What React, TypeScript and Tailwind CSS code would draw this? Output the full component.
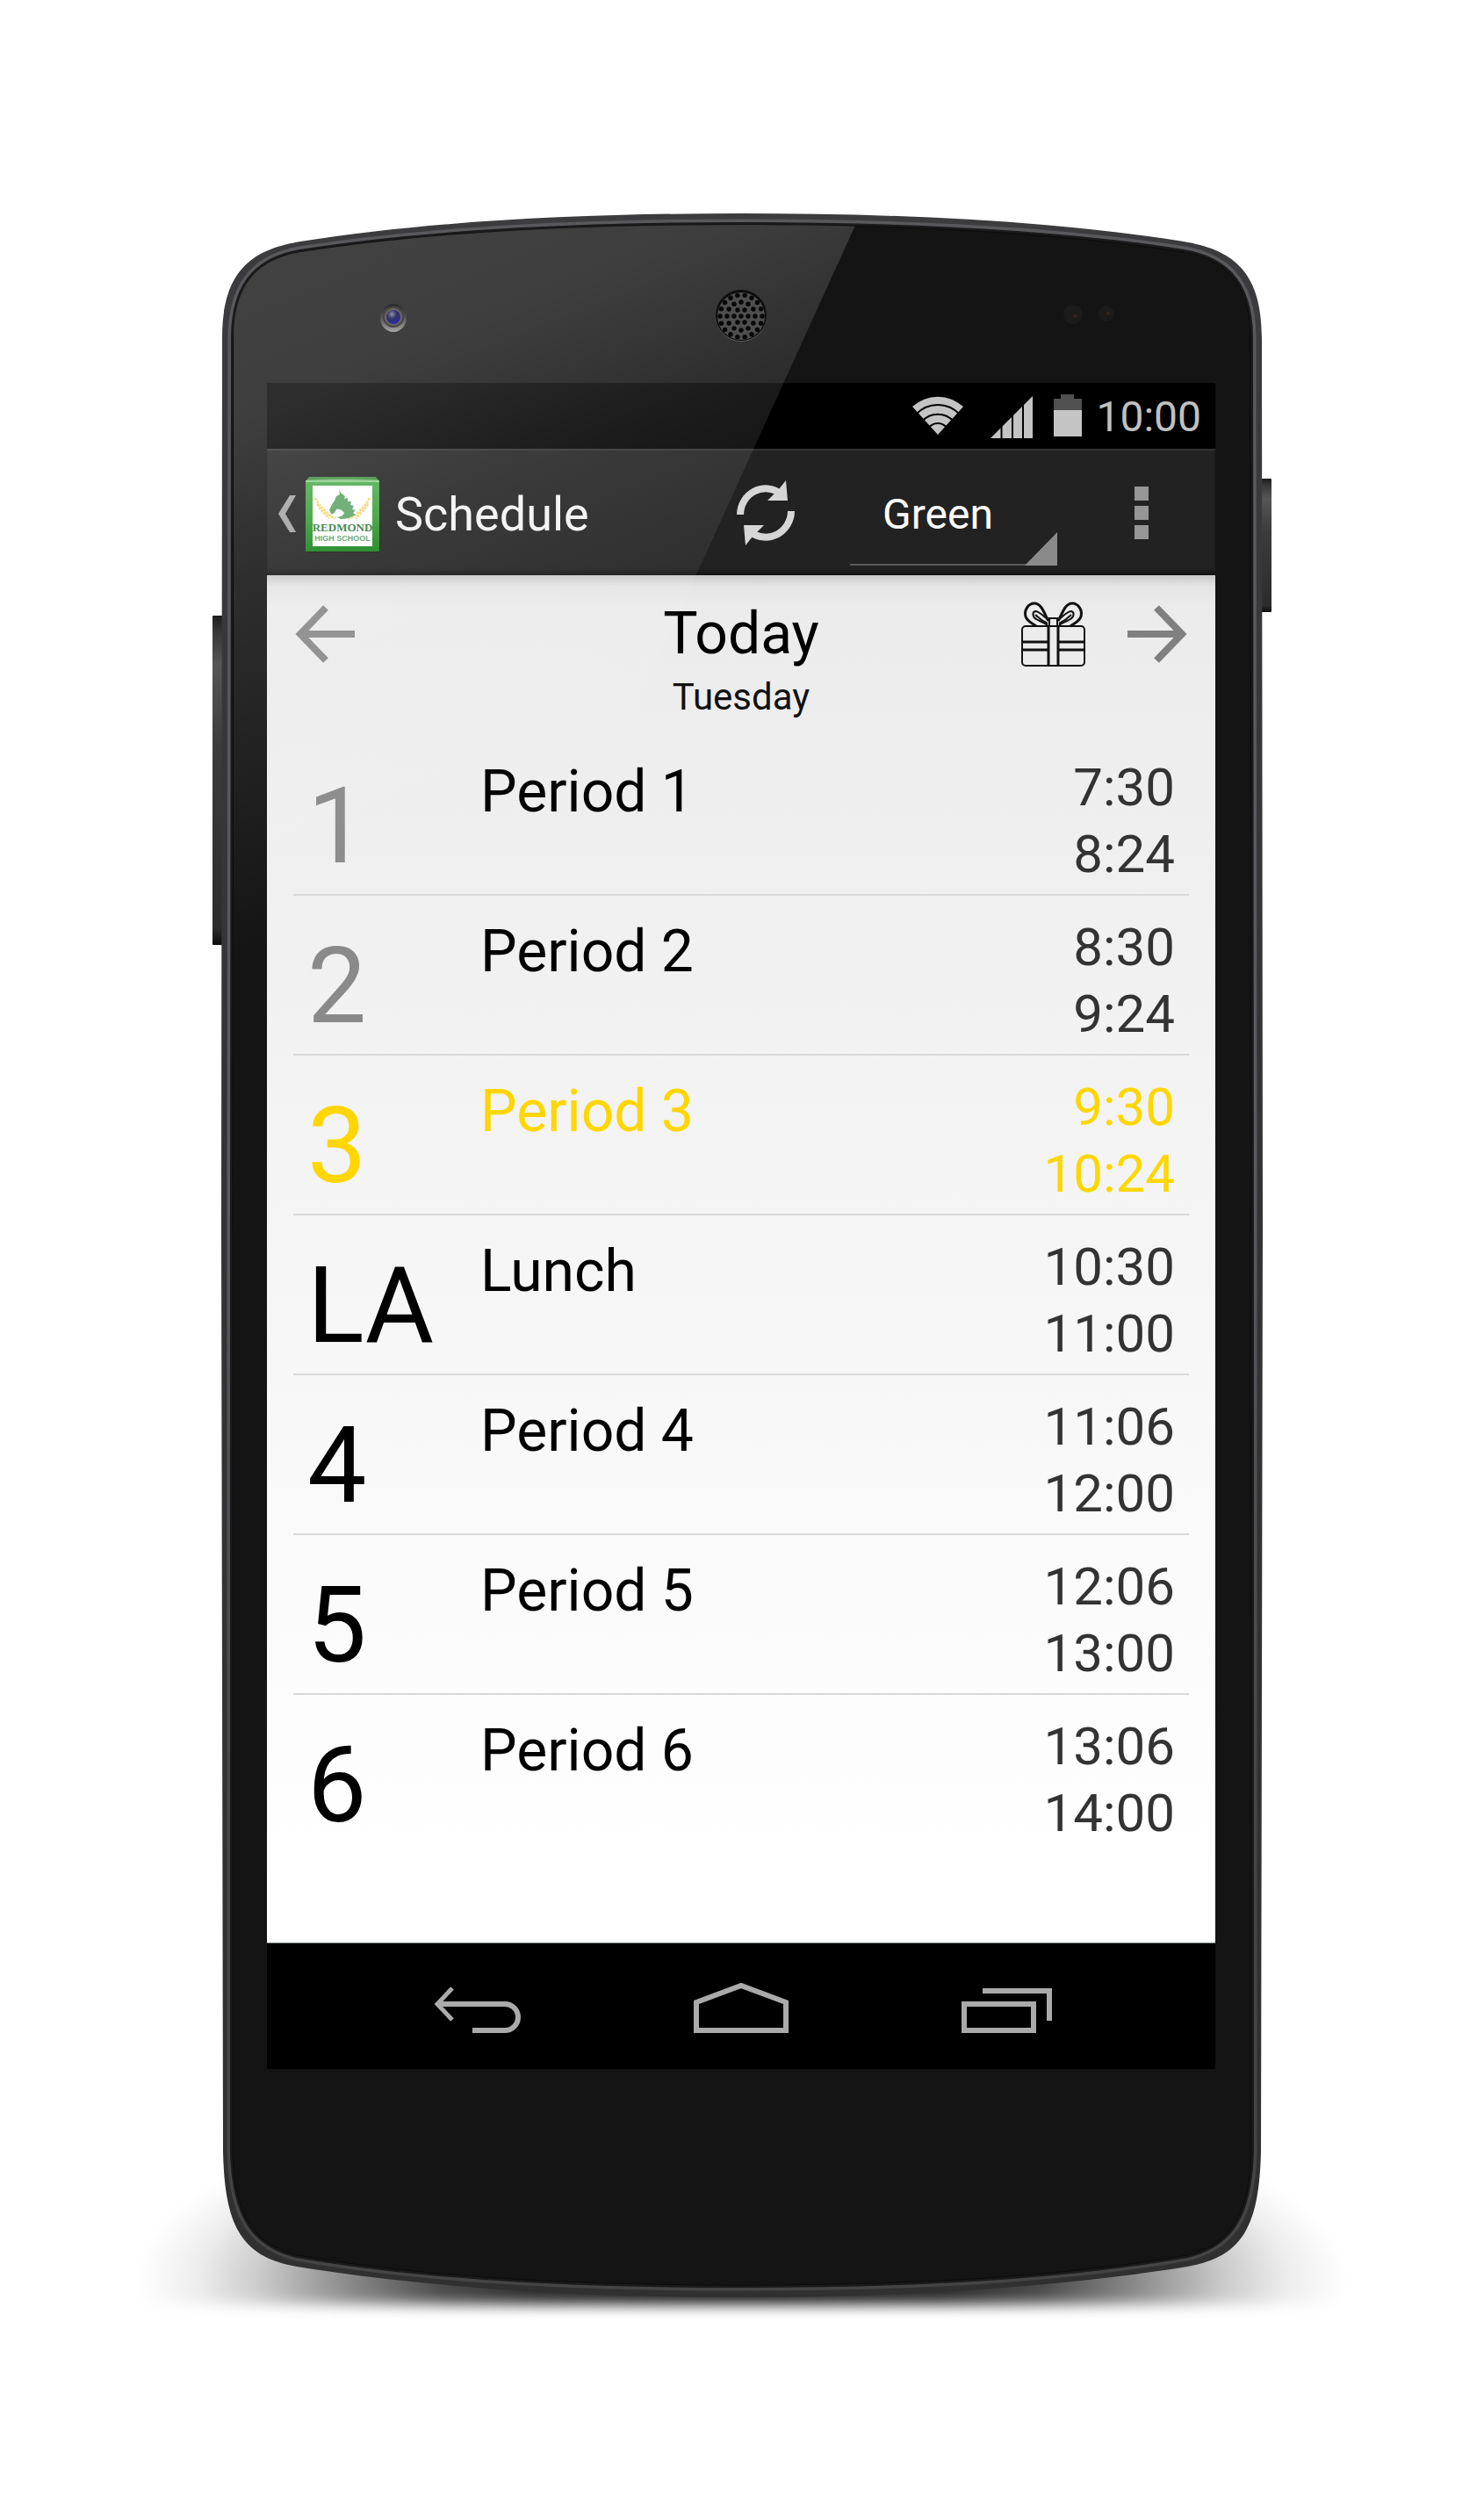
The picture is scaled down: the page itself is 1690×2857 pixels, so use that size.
import React from "react";

type Period = {
  code: string;
  name: string;
  start: string;
  end: string;
  state: "past" | "current" | "upcoming";
};

const periods: Period[] = [
  { code: "1", name: "Period 1", start: "7:30", end: "8:24", state: "past" },
  { code: "2", name: "Period 2", start: "8:30", end: "9:24", state: "past" },
  { code: "3", name: "Period 3", start: "9:30", end: "10:24", state: "current" },
  { code: "LA", name: "Lunch", start: "10:30", end: "11:00", state: "upcoming" },
  { code: "4", name: "Period 4", start: "11:06", end: "12:00", state: "upcoming" },
  { code: "5", name: "Period 5", start: "12:06", end: "13:00", state: "upcoming" },
  { code: "6", name: "Period 6", start: "13:06", end: "14:00", state: "upcoming" },
];

const tones = {
  past: { code: "text-[#8a8a8a]", name: "text-black", time: "text-[#333333]" },
  current: { code: "text-[#ffd600]", name: "text-[#ffd600]", time: "text-[#ffd600]" },
  upcoming: { code: "text-black", name: "text-black", time: "text-[#333333]" },
};

const BODY =
  "M845 243 C680 243 500 250 342 275 C290 284 253 305 253 385 L252 1400 L254 2450 C256 2535 275 2570 338 2581 C500 2607 680 2616 845 2616 C1010 2616 1190 2607 1352 2581 C1415 2570 1434 2535 1436 2450 L1438 1400 L1437 385 C1437 305 1400 284 1348 275 C1190 250 1010 243 845 243 Z";
const FACE =
  "M845 256 C690 256 500 262 342 287 C302 294 266 315 266 385 L265 1400 L265 2450 C267 2525 290 2556 338 2568 C500 2596 680 2602 845 2602 C1010 2602 1190 2596 1352 2568 C1400 2556 1423 2525 1425 2450 L1425 1400 L1424 385 C1424 315 1388 294 1348 287 C1190 262 1000 256 845 256 Z";

function speakerHoles() {
  const holes: { x: number; y: number }[] = [{ x: 844, y: 360 }];
  [6, 12, 18].forEach((count, ring) => {
    const radius = (ring + 1) * 8;
    for (let i = 0; i < count; i++) {
      const angle = (i / count) * Math.PI * 2;
      holes.push({
        x: 844 + Math.cos(angle) * radius,
        y: 360 + Math.sin(angle) * radius,
      });
    }
  });
  return holes;
}

function PhoneBody() {
  return (
    <svg
      className="absolute inset-0 h-full w-full"
      viewBox="0 0 1690 2857"
      preserveAspectRatio="none"
      aria-hidden="true"
    >
      <defs>
        <radialGradient
          id="ground"
          gradientUnits="userSpaceOnUse"
          cx="0"
          cy="0"
          r="1"
          gradientTransform="translate(845 2595) scale(690 215)"
        >
          <stop offset="0" stopColor="#000" stopOpacity="0.9" />
          <stop offset="0.35" stopColor="#000" stopOpacity="0.82" />
          <stop offset="0.5" stopColor="#000" stopOpacity="0.7" />
          <stop offset="0.65" stopColor="#000" stopOpacity="0.46" />
          <stop offset="0.8" stopColor="#000" stopOpacity="0.2" />
          <stop offset="0.9" stopColor="#000" stopOpacity="0.07" />
          <stop offset="1" stopColor="#000" stopOpacity="0" />
        </radialGradient>
        <filter id="soft" x="-5%" y="-20%" width="110%" height="140%">
          <feGaussianBlur stdDeviation="0 8" />
        </filter>
        <linearGradient id="rim" x1="0" y1="0" x2="0" y2="1">
          <stop offset="0" stopColor="#3c3c3e" />
          <stop offset="0.4" stopColor="#343436" />
          <stop offset="1" stopColor="#303030" />
        </linearGradient>
        <linearGradient id="shine" x1="0" y1="0" x2="0" y2="1">
          <stop offset="0" stopColor="#59595d" />
          <stop offset="0.45" stopColor="#5a5a5f" />
          <stop offset="0.8" stopColor="#454547" />
          <stop offset="1" stopColor="#444446" />
        </linearGradient>
        <linearGradient id="sideKey" x1="0" y1="0" x2="0" y2="1">
          <stop offset="0" stopColor="#1c1c1c" />
          <stop offset="0.05" stopColor="#383838" />
          <stop offset="0.15" stopColor="#565656" />
          <stop offset="0.4" stopColor="#3c3c3c" />
          <stop offset="0.95" stopColor="#2c2c2c" />
          <stop offset="1" stopColor="#0c0c0c" />
        </linearGradient>
      </defs>

      <rect x="130" y="2370" width="1430" height="254" fill="url(#ground)" filter="url(#soft)" />
      <rect x="242" y="701" width="12" height="375" rx="1" fill="url(#sideKey)" />
      <rect x="1436" y="545" width="12" height="152" rx="1" fill="url(#sideKey)" />
      <path d={BODY} fill="url(#rim)" />
      <path d={FACE} fill="none" stroke="url(#shine)" strokeWidth="13" />
      <path d={FACE} fill="#141414" stroke="#1a1a1b" strokeWidth="6" />
      <path d={FACE} fill="#141414" stroke="#0b0b0b" strokeWidth="1" />

      <circle cx="1222" cy="358" r="11" fill="#1b1b1b" />
      <circle cx="1260" cy="357" r="9" fill="#1b1b1b" />
      <circle cx="1224" cy="360" r="2" fill="#3a221a" />
      <circle cx="1262" cy="357" r="2" fill="#3a221a" />
    </svg>
  );
}

function GlassReflection() {
  return (
    <svg
      className="pointer-events-none absolute inset-0 h-full w-full"
      viewBox="0 0 1690 2857"
      preserveAspectRatio="none"
      aria-hidden="true"
    >
      <defs>
        <clipPath id="faceClip">
          <path d={FACE} />
        </clipPath>
        <linearGradient
          id="gloss"
          gradientUnits="userSpaceOnUse"
          x1="266"
          y1="250"
          x2="559"
          y2="982"
        >
          <stop offset="0" stopColor="#fff" stopOpacity="0.2" />
          <stop offset="0.27" stopColor="#fff" stopOpacity="0.18" />
          <stop offset="0.49" stopColor="#fff" stopOpacity="0.11" />
          <stop offset="0.72" stopColor="#fff" stopOpacity="0.06" />
          <stop offset="1" stopColor="#fff" stopOpacity="0" />
        </linearGradient>
        <linearGradient id="lensRing" x1="0" y1="0" x2="0" y2="1">
          <stop offset="0" stopColor="#2a2a2a" />
          <stop offset="0.5" stopColor="#555" />
          <stop offset="1" stopColor="#a8a6a4" />
        </linearGradient>
        <radialGradient id="lens" cx="0.4" cy="0.3" r="0.8">
          <stop offset="0" stopColor="#8f93a8" />
          <stop offset="0.4" stopColor="#35356a" />
          <stop offset="1" stopColor="#2a22b8" />
        </radialGradient>
      </defs>
      <path d="M266 250 H977 L592 1096 H266 Z" fill="url(#gloss)" clipPath="url(#faceClip)" />

      <ellipse cx="448" cy="362" rx="15" ry="16" fill="url(#lensRing)" />
      <circle cx="448" cy="361" r="12" fill="#4a4846" />
      <circle cx="448" cy="361" r="10" fill="#6c6864" />
      <circle cx="448" cy="361" r="8" fill="url(#lens)" />

      <circle cx="844" cy="360" r="29" fill="#5a5a5a" />
      <circle cx="844" cy="359" r="29" fill="#0d0d0d" />
      <circle cx="844" cy="360" r="27" fill="#4e4e4e" />
      {speakerHoles().map((hole, index) => (
        <circle key={index} cx={hole.x} cy={hole.y} r="2.700" fill="#070707" />
      ))}
    </svg>
  );
}

function StatusBar() {
  return (
    <div className="flex h-[75px] items-center justify-end bg-black pt-0.5 pr-4">
      <svg width="200" height="75" viewBox="0 0 200 75" aria-hidden="true">
        <path d="M36 58 L7 26 A43 43 0 0 1 65 26 Z" fill="#c4c4c4" />
        <g fill="none" stroke="#000" strokeWidth="2">
          <path d="M11 35 A34 34 0 0 1 61 35" />
          <path d="M18 43 A24 24 0 0 1 54 43" />
          <path d="M25 51 A13 13 0 0 1 47 51" />
        </g>
        <path d="M96 62 L144 14 V62 Z" fill="#c4c4c4" />
        <path d="M108.500 10 V64 M121 10 V64 M133 10 V64" stroke="#000" strokeWidth="2" />
        <path d="M176 12 H191 V17 H200 V30 H168 V17 H176 Z" fill="#505050" />
        <rect x="168" y="30" width="32" height="30" fill="#c4c4c4" />
      </svg>
      <span className="ml-4 text-[48px] leading-[56px] text-[#c0c0c0]">10:00</span>
    </div>
  );
}

function SchoolBadge() {
  return (
    <svg width="132" height="90" viewBox="0 0 132 90" aria-hidden="true">
      <defs>
        <linearGradient id="badge" x1="0" y1="0" x2="0" y2="1">
          <stop offset="0" stopColor="#4faa4f" />
          <stop offset="0.5" stopColor="#36a036" />
          <stop offset="1" stopColor="#15821a" />
        </linearGradient>
        <radialGradient id="badgeTop" cx="0.5" cy="1" r="0.7">
          <stop offset="0" stopColor="#a9dba9" />
          <stop offset="1" stopColor="#3f9040" />
        </radialGradient>
      </defs>
      <path d="M33 25 H26 L13 46 L26 67 H33 L21 46 Z" fill="#a3a3a3" />
      <rect x="44" y="7" width="85" height="83" fill="#000" opacity="0.25" />
      <rect x="44" y="9" width="84" height="80" fill="url(#badge)" />
      <path d="M48 4 H124 L128 9 H44 Z" fill="url(#badgeTop)" />
      <rect x="44" y="8" width="84" height="2" fill="#8fcf90" />
      <rect x="52" y="14" width="68" height="69" fill="#fff" />
      <path
        d="M55 28 Q60 38 67 43 Q72 50 78 51 M57 35 Q63 44 71 51 M117 28 Q112 38 105 43 Q100 50 92 51 M115 35 Q109 44 101 51"
        fill="none"
        stroke="#f3d884"
        strokeWidth="3"
        strokeDasharray="3 1"
      />
      <path
        d="M82 19 L85 23 L89 26 L88 29 L92 28 L92 32 L96 32 L95 36 L99 37 L97 41 L101 42 L98 45 L101 47 Q94 52 84 52 L80 50 Q87 49 88 45 Q84 40 79 41 Q76 48 73 46 L71 42 Q73 36 77 31 L79 26 L83 24 Z"
        fill="#5fa468"
      />
      <text
        x="86"
        y="66"
        textAnchor="middle"
        fontFamily="Liberation Serif, serif"
        fontSize="13"
        fontWeight="700"
        fill="#2f7c3f"
      >
        REDMOND
      </text>
      <text
        x="86"
        y="77"
        textAnchor="middle"
        fontFamily="Liberation Sans, sans-serif"
        fontSize="9"
        fontWeight="700"
        fill="#5da068"
      >
        HIGH SCHOOL
      </text>
    </svg>
  );
}

function ActionBar() {
  return (
    <header className="flex h-[144px] items-center border-t-2 border-[#333333] bg-[#222222] shadow-[inset_0_-5px_4px_-1px_#151515]">
      <button type="button" aria-label="Navigate up" className="shrink-0">
        <SchoolBadge />
      </button>
      <h1 className="ml-3.5 flex-1 pt-1 text-[54px] leading-[64px] text-[#f3f3f3]">Schedule</h1>
      <button
        type="button"
        aria-label="Refresh"
        className="flex h-full w-[168px] shrink-0 items-center justify-center"
      >
        <svg width="76" height="80" viewBox="0 0 76 80" aria-hidden="true">
          <g fill="none" stroke="#d6d6d6" strokeWidth="8">
            <path d="M9 42 A29 30 0 0 1 55 18" />
            <path d="M67 38 A29 30 0 0 1 21 62" />
          </g>
          <path d="M53 13 L61 3 L63 26 H40 L48 18 Z" fill="#d6d6d6" />
          <path d="M23 67 L15 77 L13 54 H36 L28 62 Z" fill="#d6d6d6" />
        </svg>
      </button>
      <div className="relative ml-3 h-full w-[236px] shrink-0">
        <select
          aria-label="Schedule color"
          defaultValue="Green"
          className="h-full w-full appearance-none bg-transparent pt-1 pr-11 pl-2 text-center text-[48px] leading-[56px] text-white [text-align-last:center]"
        >
          <option>Green</option>
        </select>
        <svg
          className="pointer-events-none absolute bottom-[11px] left-0 w-full"
          height="38"
          viewBox="0 0 236 38"
          aria-hidden="true"
        >
          <rect x="0" y="36" width="236" height="2" fill="#5a5a5a" />
          <path d="M236 0 V38 H199 Z" fill="#8a8a8a" />
        </svg>
      </div>
      <button
        type="button"
        aria-label="More options"
        className="ml-3 flex h-full w-[168px] shrink-0 flex-col items-center justify-center gap-1.5"
      >
        <span className="size-4 bg-[#969696]" />
        <span className="size-4 bg-[#969696]" />
        <span className="size-4 bg-[#969696]" />
      </button>
    </header>
  );
}

function GiftIcon() {
  return (
    <svg width="74" height="74" viewBox="0 0 74 74" fill="none" stroke="#111" strokeWidth="2" aria-hidden="true">
      <rect x="2" y="28" width="71" height="45" rx="4" />
      <path d="M3 46 H32 M3 55 H32 M43 46 H72 M43 55 H72" strokeWidth="3" />
      <path d="M32 28 V73 M43 28 V73" strokeWidth="3" />
      <path d="M33 19 H42 V28 H33 Z" />
      <path d="M32 22 C27 13 24 2 16 2 C9 2 4 10 6 17 C8 23 13 24 18 28" strokeWidth="3" />
      <path d="M32 21 C26 17 22 11 17 11 C13 12 14 18 18 20 C23 23 28 24 31 27" />
      <path d="M31 25 C25 22 21 19 17 15" />
      <path d="M43 22 C48 13 51 2 59 2 C66 2 71 10 69 17 C67 23 62 24 57 28" strokeWidth="3" />
      <path d="M43 21 C49 17 53 11 58 11 C62 12 61 18 57 20 C52 23 47 24 44 27" />
      <path d="M44 25 C50 22 54 19 58 15" />
    </svg>
  );
}

function DayHeader() {
  return (
    <div className="grid grid-cols-[1fr_auto_1fr] px-[30px] pt-7 pb-[19px]">
      <div className="flex h-[78px] items-center">
        <button type="button" aria-label="Previous day">
          <svg width="70" height="66" viewBox="0 0 70 66" aria-hidden="true">
            <path d="M70 33 H8 M37 3 L8 33 L37 63" fill="none" stroke="#8a8a8a" strokeWidth="8" />
          </svg>
        </button>
      </div>
      <div className="text-center">
        <h2 className="text-[66px] leading-[78px] text-black">Today</h2>
        <p className="mt-2 text-[42px] leading-[50px] text-[#111111]">Tuesday</p>
      </div>
      <div className="flex h-[78px] items-center justify-end gap-12">
        <button type="button" aria-label="Special day">
          <GiftIcon />
        </button>
        <button type="button" aria-label="Next day">
          <svg width="70" height="66" viewBox="0 0 70 66" aria-hidden="true">
            <path d="M0 33 H62 M33 3 L62 33 L33 63" fill="none" stroke="#808080" strokeWidth="8" />
          </svg>
        </button>
      </div>
    </div>
  );
}

function PeriodRow({ period }: { period: Period }) {
  const tone = tones[period.state];
  return (
    <li className="flex h-[182px] items-start border-b-2 border-[#d9d9d9] pr-4 pl-4 last:border-transparent">
      <span className={`w-[197px] shrink-0 pt-[33px] text-[120px] leading-[140px] ${tone.code}`}>
        {period.code}
      </span>
      <span className={`flex-1 pt-[25px] text-[66px] leading-[78px] ${tone.name}`}>{period.name}</span>
      <span className={`flex flex-col pt-[21px] text-right text-[60px] leading-[76px] ${tone.time}`}>
        <time>{period.start}</time>
        <time>{period.end}</time>
      </span>
    </li>
  );
}

function NavigationBar() {
  return (
    <nav
      aria-label="System"
      className="flex h-[144px] items-stretch justify-center border-t border-[#6f7a78] bg-black"
    >
      <button type="button" aria-label="Back" className="flex w-[28%] items-center justify-center">
        <svg width="120" height="72" viewBox="0 0 120 72" fill="none" stroke="#aaaaaa" strokeWidth="6" aria-hidden="true">
          <path d="M16 33 H93 A15 15 0 0 1 93 63 H56" />
          <path d="M33 15 L16 33 L33 51" strokeWidth="5" />
        </svg>
      </button>
      <button type="button" aria-label="Home" className="flex w-[28%] items-center justify-center">
        <svg width="120" height="72" viewBox="0 0 120 72" fill="none" stroke="#aaaaaa" strokeWidth="6" aria-hidden="true">
          <path d="M9 63 V31 L60 12 L111 31 V63 Z" />
        </svg>
      </button>
      <button type="button" aria-label="Recent apps" className="flex w-[28%] items-center justify-center">
        <svg width="120" height="72" viewBox="0 0 120 72" fill="none" stroke="#aaaaaa" strokeWidth="6" aria-hidden="true">
          <rect x="12" y="33" width="79" height="30" />
          <path d="M33 18 H109 V52" />
        </svg>
      </button>
    </nav>
  );
}

export default function App() {
  return (
    <main className="min-h-screen bg-white font-['Roboto',sans-serif]">
      <div className="relative mx-auto grid max-w-[1690px] grid-cols-[304fr_1080fr_306fr] pt-[436px] pb-[501px]">
        <PhoneBody />
        <div className="relative col-start-2">
          <StatusBar />
          <ActionBar />
          <div className="bg-linear-to-b from-[#ebebeb] to-white to-95%">
            <div className="bg-linear-to-b from-black/15 via-black/3 via-[12px] to-transparent to-[36px]">
              <DayHeader />
              <ul className="px-[30px] pb-[100px]">
                {periods.map((period) => (
                  <PeriodRow key={period.code} period={period} />
                ))}
              </ul>
            </div>
          </div>
          <NavigationBar />
        </div>
        <GlassReflection />
      </div>
    </main>
  );
}
